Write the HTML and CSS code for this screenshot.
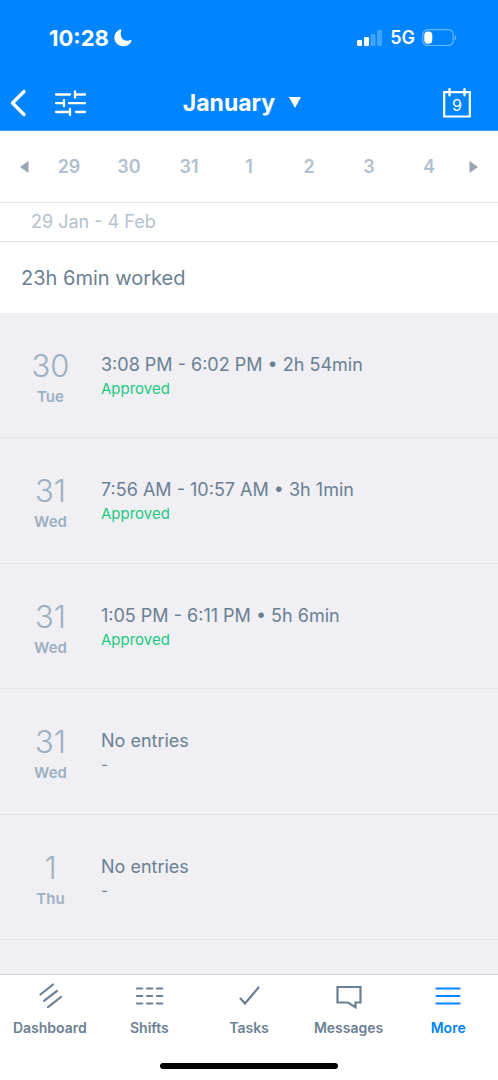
FILE: index.html
```
<!DOCTYPE html>
<html lang="en">
<head>
<meta charset="utf-8">
<meta name="viewport" content="width=device-width, initial-scale=1">
<title>Timesheet</title>
<link rel="stylesheet" href="styles.css">
</head>
<body>
<div class="app">
  <header class="top">
    <div class="status">
      <div class="status-left">
        <span class="clock">10:28</span>
        <svg class="moon" width="18" height="18" viewBox="0 0 18 18" aria-hidden="true"><path d="M6 .5C2.600 1.800 .4 5 .4 8.600c0 4.900 3.800 8.700 8.700 8.700 3.700 0 6.900-2.100 8.300-5.400.3-.6-.1-1-.7-.8-1 .4-2 .6-3 .6-4.200 0-6.900-2.700-6.900-6.800 0-1.200.2-2.300.6-3.300.3-.8-.5-1.400-1.400-1.100z" fill="#fff"/></svg>
      </div>
      <div class="status-right">
        <svg width="26" height="16" viewBox="0 0 26 16" fill="#fff" aria-hidden="true"><rect y="10" width="5" height="6" rx="1.200"/><rect x="7" y="7" width="5" height="9" rx="1.200"/><g opacity=".25"><rect x="13.500" y="4" width="5" height="12" rx="1.200"/><rect x="20" y="0" width="5" height="16" rx="1.200"/></g></svg>
        <span class="network">5G</span>
        <svg width="35" height="18" viewBox="0 0 35 18" aria-hidden="true"><rect x=".7" y=".7" width="30.600" height="15.800" rx="5" fill="none" stroke="#fff" stroke-opacity=".42" stroke-width="1.200"/><rect x="2.300" y="2.500" width="8" height="12.200" rx="3.600" fill="#fff"/><path d="M32.800 6.200c2 .8 2 4.200 0 5z" fill="#fff" opacity=".45"/></svg>
      </div>
    </div>
    <div class="nav">
      <div class="nav-side">
        <button class="icon-button" aria-label="Back"><svg width="18" height="28" viewBox="0 0 18 28"><path d="M15 2.500 3.500 14 15 25.500" fill="none" stroke="#fff" stroke-width="3.400" stroke-linecap="round" stroke-linejoin="round"/></svg></button>
        <button class="icon-button" aria-label="Filters"><svg width="32" height="26" viewBox="0 0 32 26"><path d="M2 4.500h14M21 4.500h10M21 1.500v6M2 13.200h8M10 10.200v6M15 13.200h16M2 22h14M16 19v6M22 22h9" fill="none" stroke="#fff" stroke-width="2.300" stroke-linecap="round"/></svg></button>
      </div>
      <button class="month">January <svg width="12" height="11" viewBox="0 0 12 11" aria-hidden="true"><path d="M0 0h12L6 11z" fill="#fff"/></svg></button>
      <div class="nav-side nav-end">
        <button class="icon-button" aria-label="Go to today, 9"><svg width="28" height="30" viewBox="0 0 28 30"><path d="M1.200 4.200h25.600v24.300H1.200z" fill="none" stroke="#fff" stroke-width="2.200"/><path d="M6.500 1.200v6M21.500 1.200v6" stroke="#fff" stroke-width="2.400" stroke-linecap="round"/><text class="date-glyph" x="14" y="22.500" text-anchor="middle">9</text></svg></button>
      </div>
    </div>
  </header>

  <nav class="week" aria-label="Days">
    <button class="arrow arrow-prev" aria-label="Previous week"><svg width="9" height="12" viewBox="0 0 9 12"><path d="M8.500 0v12L0 6z" fill="#99a5b0"/></svg></button>
    <button class="day">29</button>
    <button class="day">30</button>
    <button class="day">31</button>
    <button class="day">1</button>
    <button class="day">2</button>
    <button class="day">3</button>
    <button class="day">4</button>
    <button class="arrow arrow-next" aria-label="Next week"><svg width="9" height="12" viewBox="0 0 9 12"><path d="M.5 0v12L9 6z" fill="#99a5b0"/></svg></button>
  </nav>
  <p class="range">29 Jan - 4 Feb</p>
  <p class="total">23h 6min worked</p>

  <main class="entries">
    <article class="entry">
      <div class="date"><span class="number">30</span><span class="weekday">Tue</span></div>
      <div class="detail"><p class="hours">3:08 PM - 6:02 PM • 2h 54min</p><p class="state approved">Approved</p></div>
    </article>
    <article class="entry">
      <div class="date"><span class="number">31</span><span class="weekday">Wed</span></div>
      <div class="detail"><p class="hours">7:56 AM - 10:57 AM • 3h 1min</p><p class="state approved">Approved</p></div>
    </article>
    <article class="entry">
      <div class="date"><span class="number">31</span><span class="weekday">Wed</span></div>
      <div class="detail"><p class="hours">1:05 PM - 6:11 PM • 5h 6min</p><p class="state approved">Approved</p></div>
    </article>
    <article class="entry">
      <div class="date"><span class="number">31</span><span class="weekday">Wed</span></div>
      <div class="detail"><p class="hours">No entries</p><p class="state">-</p></div>
    </article>
    <article class="entry">
      <div class="date"><span class="number">1</span><span class="weekday">Thu</span></div>
      <div class="detail"><p class="hours">No entries</p><p class="state">-</p></div>
    </article>
  </main>

  <footer class="bottom">
    <nav class="tabs" aria-label="Main">
      <a class="tab" href="#dashboard"><svg class="tab-icon" viewBox="0 0 32 28"><path d="M6.500 12.500 19 2.500M10 18.800 23 8.800M14 25.200 27 15"/></svg>Dashboard</a>
      <a class="tab" href="#shifts"><svg class="tab-icon" viewBox="0 0 32 28"><path d="M4 6.500h5.200M14 6.500h5.200M24 6.500h5.200M4 14h5.200M14 14h5.200M24 14h5.200M4 21.500h5.200M14 21.500h5.200M24 21.500h5.200"/></svg>Shifts</a>
      <a class="tab" href="#tasks"><svg class="tab-icon" viewBox="0 0 32 28"><path d="M7.500 16.500 12 21.500 25.500 5.500"/></svg>Tasks</a>
      <a class="tab" href="#messages"><svg class="tab-icon" viewBox="0 0 32 28"><path d="M4.500 5h23v15.500H22.500v4.700L15 20.500H4.500z"/></svg>Messages</a>
      <a class="tab current" href="#more" aria-current="page"><svg class="tab-icon" viewBox="0 0 32 28"><path d="M4.500 6.500h23M4.500 14h23M4.500 21.500h23"/></svg>More</a>
    </nav>
    <div class="home-bar"></div>
  </footer>
</div>
</body>
</html>
```
FILE: styles.css
```
* { box-sizing: border-box; }
body { margin: 0; font-family: Inter, "Liberation Sans", sans-serif; color: #6b8093; background: #fff; }
p { margin: 0; }
button { margin: 0; padding: 0; border: 0; background: none; font: inherit; color: inherit; cursor: pointer; }
svg { display: block; flex: none; }

.app { display: flex; flex-direction: column; min-height: 100vh; }

.top { background: #0084ff; color: #fff; border-bottom: 1px solid #409fff; }
.status { display: flex; align-items: center; justify-content: space-between; height: 75px; padding: 0 41px 0 49px; }
.status-left { display: flex; align-items: center; gap: 5px; }
.status-right { display: flex; align-items: center; gap: 7px; }
.clock { font-size: 22px; font-weight: 700; }
.network { font-size: 18px; font-weight: 600; }

.nav { display: grid; grid-template-columns: 1fr auto 1fr; align-items: center; height: 55px; padding: 0 27px 0 9px; }
.nav-side { display: flex; align-items: center; gap: 27px; }
.nav-end { justify-content: flex-end; }
.month { display: flex; align-items: center; gap: 14px; margin-left: 4px; font-size: 23px; font-weight: 700; }
.date-glyph { font-size: 16px; fill: #fff; }

.week { display: grid; grid-template-columns: 39px repeat(7, 1fr) 39px; height: 72px; border-bottom: 1px solid #e3e5e8; }
.day { font-size: 18px; font-weight: 600; color: #b1bfce; }
.arrow { display: flex; align-items: center; justify-content: center; }
.arrow-prev { padding-left: 9px; }
.arrow-next { padding-right: 10px; }

.range { padding: 0 31px; font-size: 18px; line-height: 38px; color: #b5c1ce; border-bottom: 1px solid #e3e5e8; }
.total { padding: 1px 21px 0; font-size: 20px; line-height: 70px; padding-top: 1px; }

.entries { flex: 1; display: grid; grid-template-rows: repeat(5, minmax(min-content, 1fr)) 34px; background: #efeff4; }
.entry { display: flex; padding: 35px 0 24px; border-bottom: 1px solid #e1e5ea; }
.date { display: flex; flex-direction: column; align-items: center; width: 101px; color: #9dafc0; }
.number { font-size: 31px; font-weight: 300; line-height: 36px; }
.weekday { font-size: 15px; font-weight: 600; line-height: 26px; }
.hours { padding-top: 5px; font-size: 18px; line-height: 24px; }
.state { font-size: 15px; line-height: 24px; }
.approved { color: #1dca7e; }

.bottom { background: #fff; border-top: 1px solid #d2d4dc; padding-bottom: 11px; }
.tabs { display: grid; grid-template-columns: repeat(5, 1fr); padding-top: 7px; }
.tab { display: flex; flex-direction: column; align-items: center; gap: 7px; font-size: 14px; font-weight: 600; line-height: 22px; color: #6b8093; text-decoration: none; }
.tab.current { color: #0084ff; }
.tab-icon { width: 32px; height: 28px; fill: none; stroke: currentColor; stroke-width: 2.2; stroke-linecap: round; }
.home-bar { width: 36%; max-width: 178px; height: 6px; margin: 24px auto 0; border-radius: 3px; background: #000; }
```
